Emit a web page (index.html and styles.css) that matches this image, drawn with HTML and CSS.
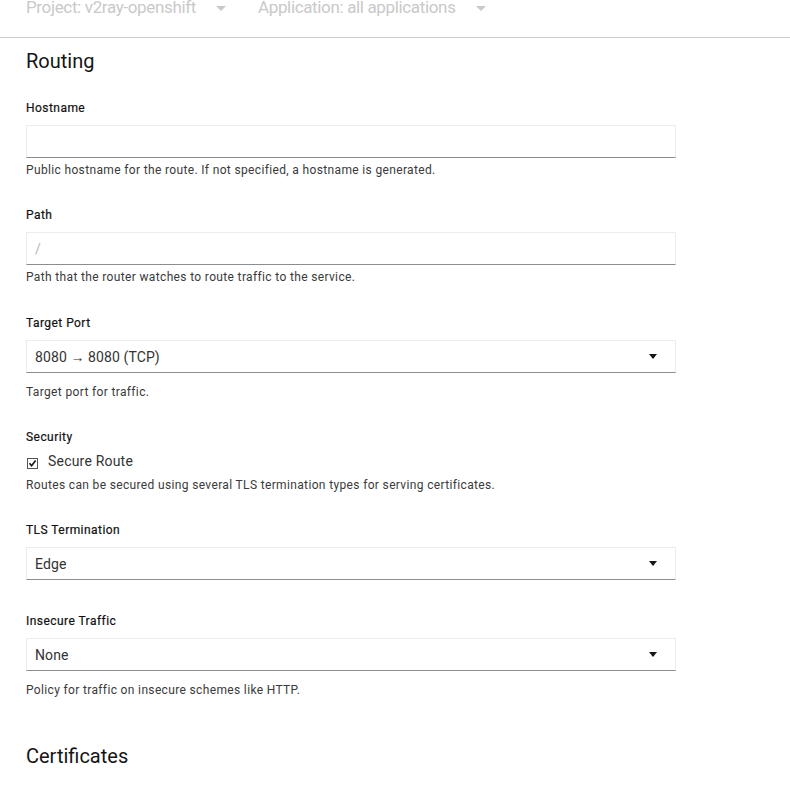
FILE: index.html
```html
<!DOCTYPE html>
<html>
<head>
<meta charset="utf-8">
<link rel="stylesheet" href="styles.css">
</head>
<body>
<header class="topbar">
  <div class="crumb">Project: v2ray-openshift <span class="caret-lg"></span></div>
  <div class="crumb">Application: all applications <span class="caret-lg"></span></div>
</header>
<main class="content">
  <h2 class="section-title">Routing</h2>

  <div class="group">
    <div class="label">Hostname</div>
    <div class="input"></div>
    <div class="help">Public hostname for the route. If not specified, a hostname is generated.</div>
  </div>

  <div class="group group-path">
    <div class="label">Path</div>
    <div class="input"><span class="placeholder">/</span></div>
    <div class="help">Path that the router watches to route traffic to the service.</div>
  </div>

  <div class="group">
    <div class="label">Target Port</div>
    <div class="input select"><span class="value">8080 &#8594; 8080 (TCP)</span><span class="caret"></span></div>
    <div class="help help-select">Target port for traffic.</div>
  </div>

  <div class="group group-security">
    <div class="label label-tight">Security</div>
    <div class="check-row">
      <svg class="checkbox" width="11" height="11" viewBox="0 0 11 11"><rect x="0.5" y="0.5" width="10" height="10" fill="#fff" stroke="#555"/><path d="M2.5 5.3 L4.6 7.8 L8.6 2.6" fill="none" stroke="#111" stroke-width="1.6"/></svg>
      <span class="check-text">Secure Route</span>
    </div>
    <div class="help help-check">Routes can be secured using several TLS termination types for serving certificates.</div>
  </div>

  <div class="group group-nohelp">
    <div class="label">TLS Termination</div>
    <div class="input select"><span class="value">Edge</span><span class="caret"></span></div>
  </div>

  <div class="group">
    <div class="label">Insecure Traffic</div>
    <div class="input select"><span class="value">None</span><span class="caret"></span></div>
    <div class="help help-select">Policy for traffic on insecure schemes like HTTP.</div>
  </div>

  <h2 class="section-title section-second">Certificates</h2>
</main>
</body>
</html>
```
FILE: styles.css
```css
* { box-sizing: border-box; }
html, body { margin: 0; padding: 0; background: #fff; }
body {
  font-family: Roboto, "Liberation Sans", Arial, sans-serif;
  color: #151515;
  width: 790px;
  height: 806px;
  overflow: hidden;
}
.topbar {
  height: 38px;
  border-bottom: 1px solid #cfcfcf;
  display: flex;
  align-items: flex-start;
  padding-left: 26px;
  gap: 32px;
}
.crumb {
  font-size: 17px;
  line-height: 20px;
  letter-spacing: -0.35px;
  margin-top: -3px;
  color: #c9c9c9;
  display: flex;
  align-items: center;
}
.caret-lg {
  display: inline-block;
  width: 0; height: 0;
  border-left: 5px solid transparent;
  border-right: 5px solid transparent;
  border-top: 5px solid #c9c9c9;
  margin-left: 20px;
  margin-top: 3px;
}
.content {
  padding-left: 26px;
  width: 676px;
}
.section-title {
  font-size: 20px;
  line-height: 24px;
  font-weight: 400;
  margin: 11px 0 27px 0;
  color: #151515;
}
.section-second {
  margin-top: 46px;
}
.group { margin-bottom: 29px; }
.group-path { margin-bottom: 30px; }
.group-security { margin-bottom: 29px; }
.group-nohelp { margin-bottom: 33px; }
.label {
  font-size: 12px;
  line-height: 16px;
  font-weight: 400;
  letter-spacing: 0.45px;
  margin-bottom: 9px;
  color: #111;
  -webkit-text-stroke: 0.2px #111;
}
.label-tight { margin-bottom: 6px; }
.input {
  height: 33px;
  width: 650px;
  border: 1px solid #ececec;
  border-bottom: 1px solid #8b8d8f;
  display: flex;
  align-items: center;
  padding: 0 8px;
  font-size: 14px;
  color: #333;
  letter-spacing: 0.1px;
}
.placeholder { color: #b8b8b8; }
.select { justify-content: space-between; padding-right: 18px; }
.caret {
  width: 0; height: 0;
  border-left: 4.5px solid transparent;
  border-right: 4.5px solid transparent;
  border-top: 5px solid #151515;
}
.help {
  font-size: 12px;
  line-height: 16px;
  letter-spacing: 0.35px;
  margin-top: 4px;
  color: #3a3a3a;
}
.help-select { margin-top: 11px; }
.check-row {
  display: flex;
  align-items: center;
  height: 20px;
}
.checkbox { margin-top: 4px; margin-right: 10px; margin-left: 1px; }
.check-text { font-size: 14px; color: #333; letter-spacing: 0.2px; }
.help-check { margin-top: 6px; }
```
